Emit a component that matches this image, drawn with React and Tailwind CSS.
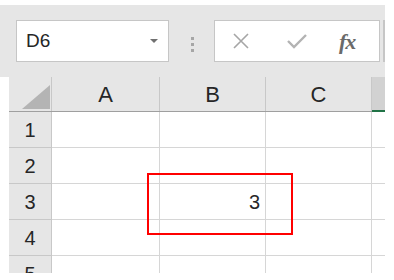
const cols = [
  { key: "A", w: "w-[108px]" },
  { key: "B", w: "w-[106px]" },
  { key: "C", w: "w-[106px]" },
];

const rows = [1, 2, 3, 4, 5];

const App = () => {
  return (
    <div className="relative w-[394px] h-[280px] overflow-hidden bg-white pt-[5px] font-['Liberation_Sans',_'Noto_Sans_CJK_JP',_sans-serif]">
      {/* Formula bar */}
      <div className="relative w-[385px] h-[72px] bg-[#e6e6e6]">
        {/* Name box */}
        <div className="absolute left-[16px] top-[15px] w-[153px] h-[42px] bg-white border border-[#c6c6c6] flex items-center pl-[9px]">
          <span className="text-[19px] text-[#262626]">D6</span>
          <span className="ml-auto mr-[10px] w-0 h-0 border-l-[4px] border-r-[4px] border-t-[4px] border-l-transparent border-r-transparent border-t-[#707070]" />
        </div>

        {/* Grip dots */}
        <div className="absolute left-[191px] top-[32px] flex flex-col gap-[3px]">
          <span className="w-[3px] h-[3px] bg-[#a6a6a6]" />
          <span className="w-[3px] h-[3px] bg-[#a6a6a6]" />
          <span className="w-[3px] h-[3px] bg-[#a6a6a6]" />
        </div>

        {/* Formula box */}
        <div className="absolute left-[214px] top-[15px] w-[166px] h-[42px] bg-white border border-[#c6c6c6] flex items-center">
          <svg className="ml-[17px]" width="18" height="18" viewBox="0 0 18 18">
            <path d="M2 2 L16 16 M16 2 L2 16" stroke="#a6a6a6" strokeWidth="1.6" fill="none" />
          </svg>
          <svg className="ml-[37px]" width="20" height="16" viewBox="0 0 20 16">
            <path d="M1 8 L7 14 L19 2" stroke="#b3b3b3" strokeWidth="2.4" fill="none" />
          </svg>
          <span className="ml-[32px] text-[22px] font-bold italic text-[#6a6a6a] font-['Liberation_Serif',_serif] tracking-[-1px]">
            fx
          </span>
        </div>

        <div className="absolute left-[383px] top-[15px] w-[2px] h-[42px] bg-[#c6c6c6]" />
      </div>

      {/* Grid */}
      <div className="ml-[9px] w-[376px]">
        {/* Column headers */}
        <div className="flex h-[35px] bg-[#e6e6e6] border-b border-[#9f9f9f]">
          <div className="relative w-[43px] border-r border-[#c8c8c8]">
            <svg className="absolute left-[13px] bottom-[2px]" width="28" height="24" viewBox="0 0 28 24">
              <path d="M28 0 L28 24 L0 24 Z" fill="#b4b4b4" />
            </svg>
          </div>
          {cols.map((c) => (
            <div
              key={c.key}
              className={`${c.w} flex items-center justify-center border-r border-[#c8c8c8] text-[22px] text-[#262626]`}
            >
              {c.key}
            </div>
          ))}
          <div className="flex-1 bg-[#d2d2d2] border-b-2 border-[#217346] -mb-px" />
        </div>

        {/* Rows */}
        {rows.map((r) => (
          <div key={r} className="flex h-[36px]">
            <div className="w-[43px] flex items-center justify-center bg-[#e6e6e6] border-r border-[#9f9f9f] border-b border-[#c8c8c8] text-[20px] text-[#262626]">
              {r}
            </div>
            {cols.map((c) => (
              <div
                key={c.key}
                className={`${c.w} flex items-center justify-end pr-[5px] border-r border-b border-[#d6d6d6] text-[20px] text-[#262626]`}
              >
                {r === 3 && c.key === "B" ? "3" : ""}
              </div>
            ))}
            <div className="flex-1 border-b border-[#d6d6d6]" />
          </div>
        ))}
      </div>

      {/* White bottom margin */}
      <div className="absolute left-0 top-[273px] w-[394px] h-[7px] bg-white" />

      {/* Red highlight */}
      <div className="absolute left-[147px] top-[173px] w-[146px] h-[62px] border-2 border-[#ff0000]" />
    </div>
  );
};

export default App;
